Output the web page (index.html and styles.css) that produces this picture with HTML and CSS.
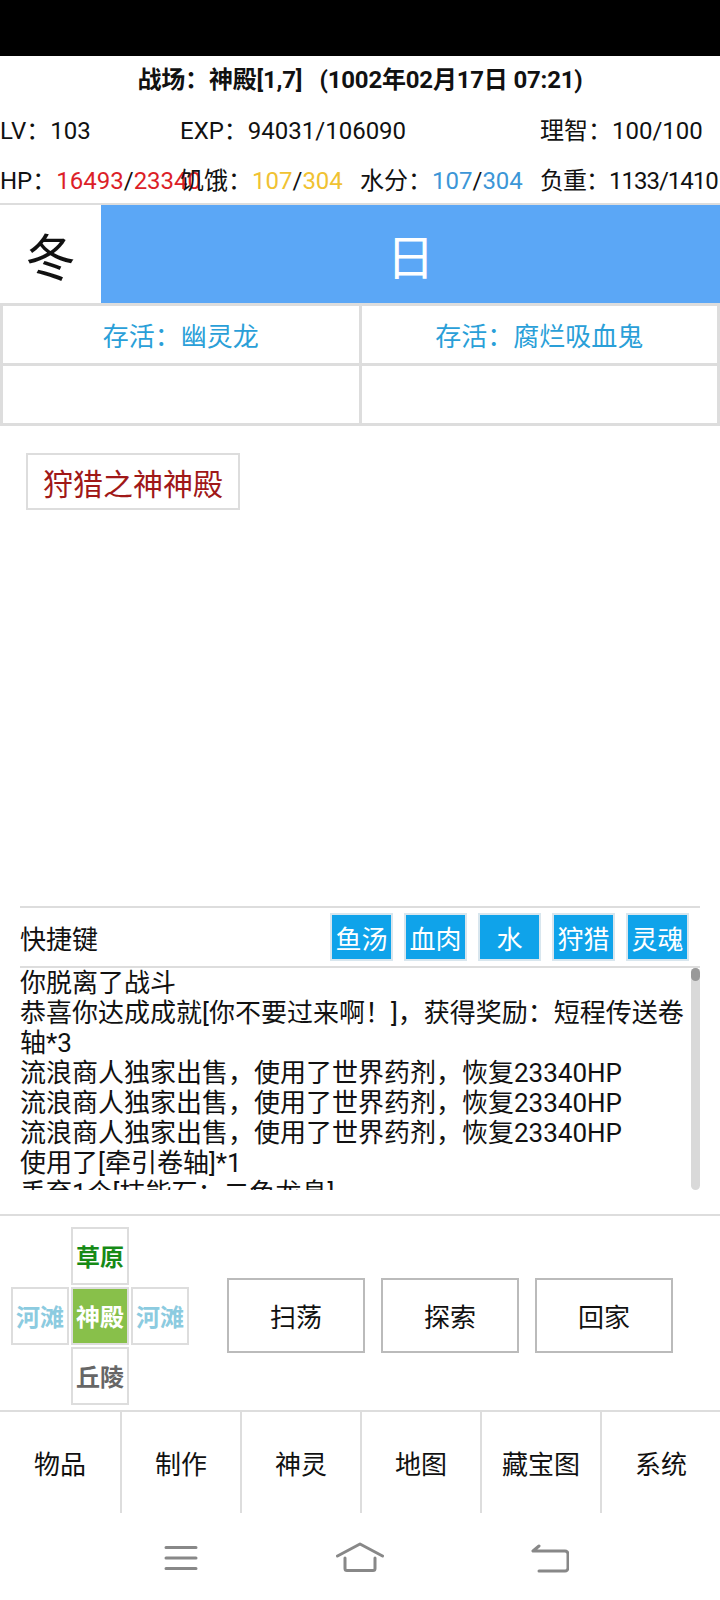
FILE: index.html
```html
<!DOCTYPE html>
<html>
  <head>
    <meta charset="utf-8">
    <title>战场</title>
    <link rel="stylesheet" href="styles.css">
  </head>
  <body>
    <div class="statusbar"></div>

    <div class="title">战场：神殿[1,7]&nbsp;&nbsp;&nbsp;(1002年02月17日 07:21)</div>

    <div class="stats">
      <span>LV：103</span>
      <span class="wide">EXP：94031/106090</span>
      <span>理智：100/100</span>
      <span>HP：<i class="red">16493</i>/<i class="red">23340</i></span>
      <span>饥饿：<i class="yellow">107</i>/<i class="yellow">304</i></span>
      <span>水分：<i class="blue">107</i>/<i class="blue">304</i></span>
      <span class="narrow">负重：1133/1410</span>
    </div>

    <div class="season">
      <div class="winter">冬</div>
      <div class="day">日</div>
    </div>

    <div class="survive">
      <div class="cell">存活：幽灵龙</div>
      <div class="cell">存活：腐烂吸血鬼</div>
      <div class="cell"></div>
      <div class="cell"></div>
    </div>

    <div class="main">
      <button class="place">狩猎之神神殿</button>
    </div>

    <div class="quick">
      <div class="quick-bar">
        <span class="quick-label">快捷键</span>
        <button class="qbtn">鱼汤</button>
        <button class="qbtn">血肉</button>
        <button class="qbtn">水</button>
        <button class="qbtn">狩猎</button>
        <button class="qbtn">灵魂</button>
      </div>
      <div class="log">
        <div class="log-text">
          <div>你脱离了战斗</div>
          <div>恭喜你达成成就[你不要过来啊！]，获得奖励：短程传送卷轴*3</div>
          <div>流浪商人独家出售，使用了世界药剂，恢复23340HP</div>
          <div>流浪商人独家出售，使用了世界药剂，恢复23340HP</div>
          <div>流浪商人独家出售，使用了世界药剂，恢复23340HP</div>
          <div>使用了[牵引卷轴]*1</div>
          <div>丢弃1个[技能石：二色龙息]</div>
        </div>
        <div class="scroll"><div class="thumb"></div></div>
      </div>
    </div>

    <div class="actions">
      <div class="dpad">
        <span></span>
        <div class="tile grass">草原</div>
        <span></span>
        <div class="tile river">河滩</div>
        <div class="tile here">神殿</div>
        <div class="tile river">河滩</div>
        <span></span>
        <div class="tile hill">丘陵</div>
        <span></span>
      </div>
      <button class="act">扫荡</button>
      <button class="act">探索</button>
      <button class="act">回家</button>
    </div>

    <div class="nav">
      <div class="nav-item">物品</div>
      <div class="nav-item">制作</div>
      <div class="nav-item">神灵</div>
      <div class="nav-item">地图</div>
      <div class="nav-item">藏宝图</div>
      <div class="nav-item">系统</div>
    </div>

    <div class="sysbar">
      <svg class="ico-menu" width="34" height="26" viewBox="0 0 34 26">
        <path d="M2 2.5H32M2 13H32M2 23.5H32" fill="none" stroke="#888" stroke-width="3" stroke-linecap="round"/>
      </svg>
      <svg class="ico-home" width="48" height="31" viewBox="0 0 48 31">
        <path d="M1.5 14L24 2L46.5 14" fill="none" stroke="#888" stroke-width="3" stroke-linecap="round" stroke-linejoin="round"/>
        <path d="M9 16V26.5a2 2 0 0 0 2 2H37a2 2 0 0 0 2-2V16" fill="none" stroke="#888" stroke-width="3" stroke-linecap="round"/>
      </svg>
      <svg class="ico-back" width="38" height="30" viewBox="0 0 38 30">
        <path d="M8 3L2 8H34a3 3 0 0 1 3 3V25a3 3 0 0 1-3 3H8" fill="none" stroke="#888" stroke-width="3" stroke-linecap="round" stroke-linejoin="round"/>
      </svg>
    </div>
  </body>
</html>
```

FILE: styles.css
```css
body { margin: 0; width: 720px; height: 1600px; overflow: hidden; background: #fff; color: #111; font-family: Roboto, "Noto Sans CJK SC", sans-serif; font-size: 26px; }
button { font-family: inherit; background: #fff; padding: 0; cursor: pointer; }
i { font-style: normal; }

.statusbar { height: 56px; background: #000; }

.title { height: 48px; line-height: 48px; text-align: center; font-size: 24px; font-weight: bold; white-space: nowrap; letter-spacing: -0.2px; }

.stats { display: grid; grid-template-columns: repeat(4, 180px); grid-template-rows: 49px 50px; align-items: center; font-size: 24px; white-space: nowrap; }
.stats .wide { grid-column: span 2; }
.stats .narrow { letter-spacing: -1px; }
.red { color: #dc1e28; }
.yellow { color: #f0c232; }
.blue { color: #3c96d7; }

.season { display: flex; height: 98px; border-top: 2px solid #ddd; }
.winter { width: 101px; display: flex; align-items: center; justify-content: center; font-size: 50px; }
.day { flex: 1; display: flex; align-items: center; justify-content: center; background: #5ba7f6; color: #fff; font-size: 48px; }

.survive { display: grid; grid-template-columns: 1fr 1fr; grid-template-rows: 57px 57px; gap: 3px; padding: 3px; background: #ddd; }
.survive .cell { background: #fff; display: flex; align-items: center; justify-content: center; color: #2a9fd8; font-size: 26px; }

.main { height: 480px; box-sizing: border-box; padding: 27px 26px; }
.place { height: 57px; padding: 0 15px; border: 2px solid #ddd; color: #a01818; font-size: 30px; }

.quick { margin: 0 20px 24px; border-top: 2px solid #ddd; }
.quick-bar { display: flex; align-items: center; height: 58px; padding-right: 11px; border-bottom: 2px solid #ddd; }
.quick-label { flex: 1; }
.qbtn { width: 63px; height: 48px; margin-left: 11px; border: 2px solid #d8e6ee; background: #0fa3ea; color: #fff; font-size: 26px; }

.log { display: flex; height: 222px; }
.log-text { flex: 1; overflow: hidden; line-height: 30px; }
.scroll { width: 9px; margin-left: 2px; border-radius: 5px; background: #d9d9d9; }
.thumb { height: 13px; border-radius: 5px; background: #999; }

.actions { display: flex; align-items: center; height: 196px; box-sizing: border-box; padding-top: 5px; border-top: 2px solid #ddd; }
.dpad { display: grid; grid-template-columns: repeat(3, 58px); grid-template-rows: repeat(3, 58px); gap: 2px; margin: 0 38px 0 11px; }
.tile { display: flex; align-items: center; justify-content: center; border: 2px solid #ddd; font-size: 24px; font-weight: bold; }
.grass { color: #168a16; }
.river { color: #8ccbe0; }
.here { background: #88c04a; color: #fff; }
.hill { color: #666; }
.act { width: 138px; height: 75px; margin-right: 16px; border: 2px solid #bbb; color: #111; font-size: 26px; }

.nav { display: grid; grid-template-columns: repeat(6, 1fr); height: 101px; border-top: 2px solid #ddd; }
.nav-item { display: flex; align-items: center; justify-content: center; }
.nav-item + .nav-item { border-left: 2px solid #ddd; }

.sysbar { display: flex; align-items: center; height: 85px; box-sizing: border-box; padding: 4px 0 0 164px; }
.ico-home { margin-left: 138px; }
.ico-back { margin-left: 147px; }
```
